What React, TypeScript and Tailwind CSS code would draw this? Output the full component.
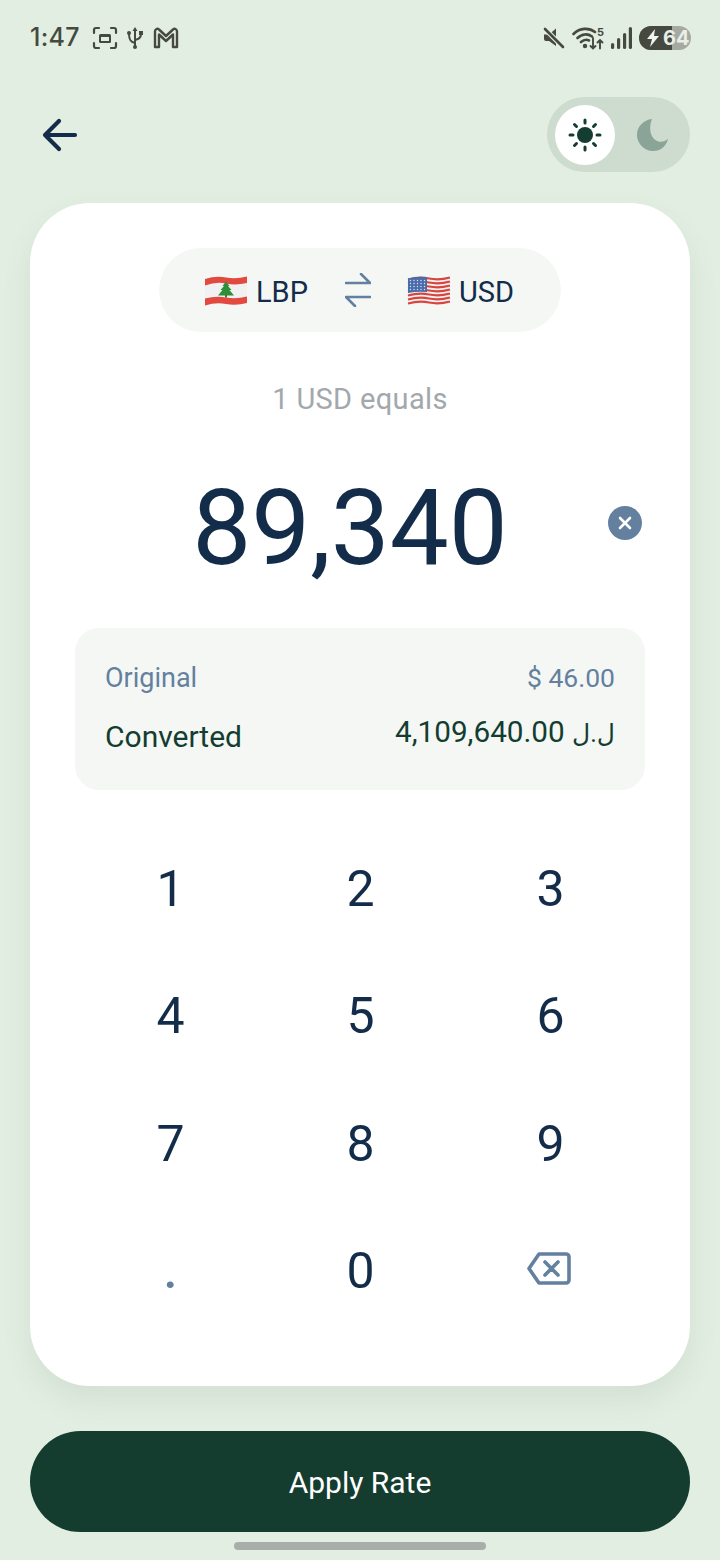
import React from "react";

const LbFlag = () => (
  <svg width="44" height="32" viewBox="0 0 44 32">
    <path d="M1 4 Q12 0.5 22 2.5 T43 1.5 V28 Q32 31 22 29 T1 30.5 Z" fill="#f1f1f1" />
    <path d="M1 4 Q12 0.5 22 2.5 T43 1.5 V8 Q32 10.5 22 8.5 T1 10.5 Z" fill="#e2493f" />
    <path d="M1 23.5 Q12 20.5 22 22.5 T43 21.5 V28 Q32 31 22 29 T1 30.5 Z" fill="#e2493f" />
    <path d="M22 6.5 L25.5 11 L24 11 L27.5 15 L25.5 15 L30 20.5 L14 20.5 L18.5 15 L16.5 15 L20 11 L18.5 11 Z" fill="#2c9038" />
    <rect x="21" y="20" width="2" height="2.5" fill="#7a5a30" />
  </svg>
);

const UsFlag = () => {
  const stripes = [0, 1, 2, 3, 4, 5, 6];
  return (
    <svg width="44" height="32" viewBox="0 0 44 32">
      <path d="M1 3.5 Q12 0.5 22 2.5 T43 1.5 V28 Q32 31 22 29 T1 30.5 Z" fill="#f3f1f1" />
      {stripes.map((i) => (
        <path key={i} d={`M1 ${4.5 + i * 4} Q12 ${1.5 + i * 4} 22 ${3.5 + i * 4} T43 ${2.5 + i * 4}`} stroke="#d8453f" strokeWidth="2.2" fill="none" />
      ))}
      <path d="M1 3.5 Q10 1 20 2.2 V17 Q10 16 1 18 Z" fill="#4a6cab" />
      {[0, 1, 2, 3].map((r) =>
        [0, 1, 2, 3, 4].map((c) => (
          <circle key={`${r}-${c}`} cx={3.5 + c * 3.5} cy={5.5 + r * 3} r="0.7" fill="#dfe6f3" />
        ))
      )}
    </svg>
  );
};

const Key = ({ children }: { children: React.ReactNode }) => (
  <div className="flex items-center justify-center h-[127.5px] text-[50px] leading-none text-[#122c49]">{children}</div>
);

export default function App() {
  return (
    <div
      className="w-[720px] h-[1560px] bg-[#e2eee2] flex flex-col overflow-hidden relative"
      style={{ fontFamily: "Roboto, 'DejaVu Sans', sans-serif" }}
    >
      {/* status bar */}
      <div className="h-[75px] pl-[30px] pr-[29px] flex items-center justify-between text-[#45493f] shrink-0">
        <div className="flex items-center">
          <span className="font-medium w-[50px] text-[25px] tracking-[0.3px]" style={{ fontFamily: "Inter, sans-serif" }}>1:47</span>
          <svg width="26" height="24" viewBox="0 0 26 24" className="ml-[12px]" fill="none" stroke="#45493f" strokeWidth="2.2">
            <path d="M2 7V4a2 2 0 0 1 2-2h3M19 2h3a2 2 0 0 1 2 2v3M24 17v3a2 2 0 0 1-2 2h-3M7 22H4a2 2 0 0 1-2-2v-3" strokeLinecap="round" />
            <rect x="7" y="8" width="12" height="9" rx="1.5" fill="#45493f" stroke="none" />
            <rect x="9" y="11" width="8" height="4" fill="#e2eee2" stroke="none" />
          </svg>
          <svg width="18" height="24" viewBox="0 0 18 24" className="ml-[8px]" fill="none" stroke="#45493f" strokeWidth="2">
            <path d="M9 3V22M9 17C4 16 3 13 3 8M9 14C14 13 15 11 15 8" />
            <path d="M9 1L6.5 5h5Z" fill="#45493f" stroke="none" />
            <circle cx="3" cy="7" r="2" fill="#45493f" stroke="none" />
            <rect x="13" y="5" width="4" height="4" fill="#45493f" stroke="none" />
            <circle cx="9" cy="21" r="2" fill="#45493f" stroke="none" />
          </svg>
          <svg width="26" height="22" viewBox="0 0 26 22" className="ml-[9px]" fill="none" stroke="#45493f" strokeWidth="2.4">
            <path d="M2 20V4.5C2 2 4.5 1 6 2.5L13 9L20 2.5C21.5 1 24 2 24 4.5V20H20V7.5L13 14L6 7.5V20Z" strokeLinejoin="round" />
          </svg>
        </div>
        <div className="flex items-center">
          <svg width="22" height="22" viewBox="0 0 22 22">
            <path d="M1 7.5H6L13 1.5V19L6 14H3Q1 14 1 12Z" fill="#45493f" />
            <path d="M2 2L21 21" stroke="#e2eee2" strokeWidth="5" />
            <path d="M2 2L20 20" stroke="#45493f" strokeWidth="2.6" strokeLinecap="round" />
          </svg>
          <svg width="32" height="24" viewBox="0 0 32 24" className="ml-[7px]" fill="none" stroke="#45493f" strokeWidth="2.6" strokeLinecap="round">
            <path d="M1.5 8C8 1.5 17 1.5 23 6M5.5 12C10 7.5 16 7.5 20 10.5M9 16C12 13.5 15 13.5 17 14.5" />
            <circle cx="13" cy="20" r="2.2" fill="#45493f" stroke="none" />
            <path d="M21 12V22.5M18.5 20L21 22.5L23.5 20M28 22.5V14M25.5 16.5L28 14L30.5 16.5" strokeWidth="1.9" />
            <text x="25" y="9.5" fontSize="11" fontWeight="700" fill="#45493f" stroke="none" fontFamily="Inter, sans-serif">5</text>
          </svg>
          <svg width="21" height="22" viewBox="0 0 21 22" className="ml-[7px]" fill="#45493f">
            <rect x="0" y="16" width="3.2" height="6" rx="1.6" />
            <rect x="6" y="11" width="3.2" height="11" rx="1.6" />
            <rect x="12" y="6" width="3.2" height="16" rx="1.6" />
            <rect x="17.8" y="0" width="3.2" height="22" rx="1.6" />
          </svg>
          <div className="relative ml-[7px] w-[52px] h-[24px] rounded-full overflow-hidden bg-[#a4aaa0] flex items-center">
            <div className="absolute left-0 top-0 bottom-0 w-[33px] bg-[#45493f]" />
            <svg width="14" height="18" viewBox="0 0 14 18" className="relative ml-[7px]" fill="#f0f4ee">
              <path d="M9 0L1 10H6L4 18L13 7H8Z" />
            </svg>
            <span className="relative ml-[3px] text-[#e9eee6] text-[20px] font-bold leading-none" style={{ fontFamily: "Inter, sans-serif" }}>64</span>
          </div>
        </div>
      </div>

      {/* header */}
      <div className="h-[128px] shrink-0 px-[30px] pt-[22px] flex items-start justify-between">
        <svg width="60" height="75" viewBox="0 0 60 75" fill="none" stroke="#122c49" strokeWidth="4.2" strokeLinecap="round" strokeLinejoin="round">
          <path d="M15 38H45M29 24L15 38L29 52" />
        </svg>
        <div className="w-[143px] h-[75px] rounded-full bg-[#cedccf] flex items-center pl-[8px]">
          <div className="w-[60px] h-[60px] rounded-full bg-white flex items-center justify-center">
            <svg width="36" height="36" viewBox="0 0 36 36" fill="#133d30" stroke="#133d30" strokeWidth="3" strokeLinecap="round">
              <circle cx="18" cy="18" r="8" stroke="none" />
              <path d="M18 3V6M18 30V33M3 18H6M30 18H33M7.5 7.5L9.5 9.5M26.5 26.5L28.5 28.5M7.5 28.5L9.5 26.5M26.5 9.5L28.5 7.5" />
            </svg>
          </div>
          <svg width="34" height="34" viewBox="0 0 36 36" fill="#8aa498" className="ml-[21px]">
            <path d="M17 1C8 2 1 9 1 18C1 27 9 35 18 35C26 35 32 30 34 22C30 26 24 26 20 23C14 18 14 8 17 1Z" />
          </svg>
        </div>
      </div>

      {/* card */}
      <div className="mx-[30px] h-[1183px] shrink-0 rounded-[60px] bg-white flex flex-col items-center pt-[45px] shadow-[0_14px_30px_rgba(60,90,70,0.09)]">
        <div className="w-[402px] h-[84px] rounded-full bg-[#f4f7f4] flex items-center text-[29px] text-[#122c49]">
          <div className="ml-[45px] mt-[1px]"><LbFlag /></div>
          <span className="ml-[8px] relative top-[3px]">LBP</span>
          <svg width="26" height="34" viewBox="0 0 26 34" className="ml-[37px]" fill="none" stroke="#64809f" strokeWidth="2.6" strokeLinecap="round" strokeLinejoin="round">
            <path d="M1 10H25L16 1M25 24H1L10 33" />
          </svg>
          <div className="ml-[36px] mt-[1px]"><UsFlag /></div>
          <span className="ml-[8px] relative top-[3px]">USD</span>
        </div>

        <div className="mt-[48px] text-[29px] leading-[38px] text-[#a2a8ac] tracking-[0.35px]">1 USD equals</div>

        <div className="relative w-full mt-[42px] h-[130px] flex items-center justify-center">
          <span className="text-[105px] leading-none text-[#122c49] -ml-[20px] relative top-[3px]">89,340</span>
          <div className="absolute left-[578px] top-[46px] w-[34px] h-[34px] rounded-full bg-[#64809f] flex items-center justify-center">
            <svg width="16" height="16" viewBox="0 0 16 16" stroke="white" strokeWidth="2.6" strokeLinecap="round">
              <path d="M3 3L13 13M13 3L3 13" />
            </svg>
          </div>
        </div>

        <div className="w-[570px] h-[162px] mt-[38px] rounded-[24px] bg-[#f4f7f4] px-[30px] pt-[32px]">
          <div className="flex justify-between items-center h-[34px] text-[27px] text-[#64809f] relative top-[1px]">
            <span>Original</span>
            <span className="text-[26.5px]">$ 46.00</span>
          </div>
          <div className="flex justify-between items-start h-[50px] mt-[12px] text-[30px] text-[#133d30] leading-[50px] relative top-[6px]">
            <span>Converted</span>
            <span className="-mt-[5px] text-[29.7px]" dir="ltr">
              4,109,640.00 <span className="text-[25px]">ل.ل</span>
            </span>
          </div>
        </div>

        <div className="w-[570px] mt-[35px] grid grid-cols-3 mr-[-1px]">
          {["1", "2", "3", "4", "5", "6", "7", "8", "9"].map((k) => (
            <Key key={k}>{k}</Key>
          ))}
          <Key><span className="text-[#64809f] font-medium">.</span></Key>
          <Key>0</Key>
          <Key>
            <svg width="44" height="33" viewBox="0 0 44 33" className="relative -left-[1.5px] -top-[3px]" fill="none" stroke="#64809f" strokeWidth="3.6" strokeLinejoin="round" strokeLinecap="round">
              <path d="M2 16.5L12 2H39a3 3 0 0 1 3 3V28a3 3 0 0 1-3 3H12Z" />
              <path d="M18 10L31 23M31 10L18 23" />
            </svg>
          </Key>
        </div>
      </div>

      {/* apply */}
      <div className="mx-[30px] mt-[45px] h-[101px] shrink-0 rounded-full bg-[#143d30] flex items-center justify-center text-white text-[30px]">
        <span className="relative top-[1px]">Apply Rate</span>
      </div>

      <div className="absolute left-[234px] bottom-[10px] w-[252px] h-[8px] rounded-full bg-[#a9aeaa]" />
    </div>
  );
}
